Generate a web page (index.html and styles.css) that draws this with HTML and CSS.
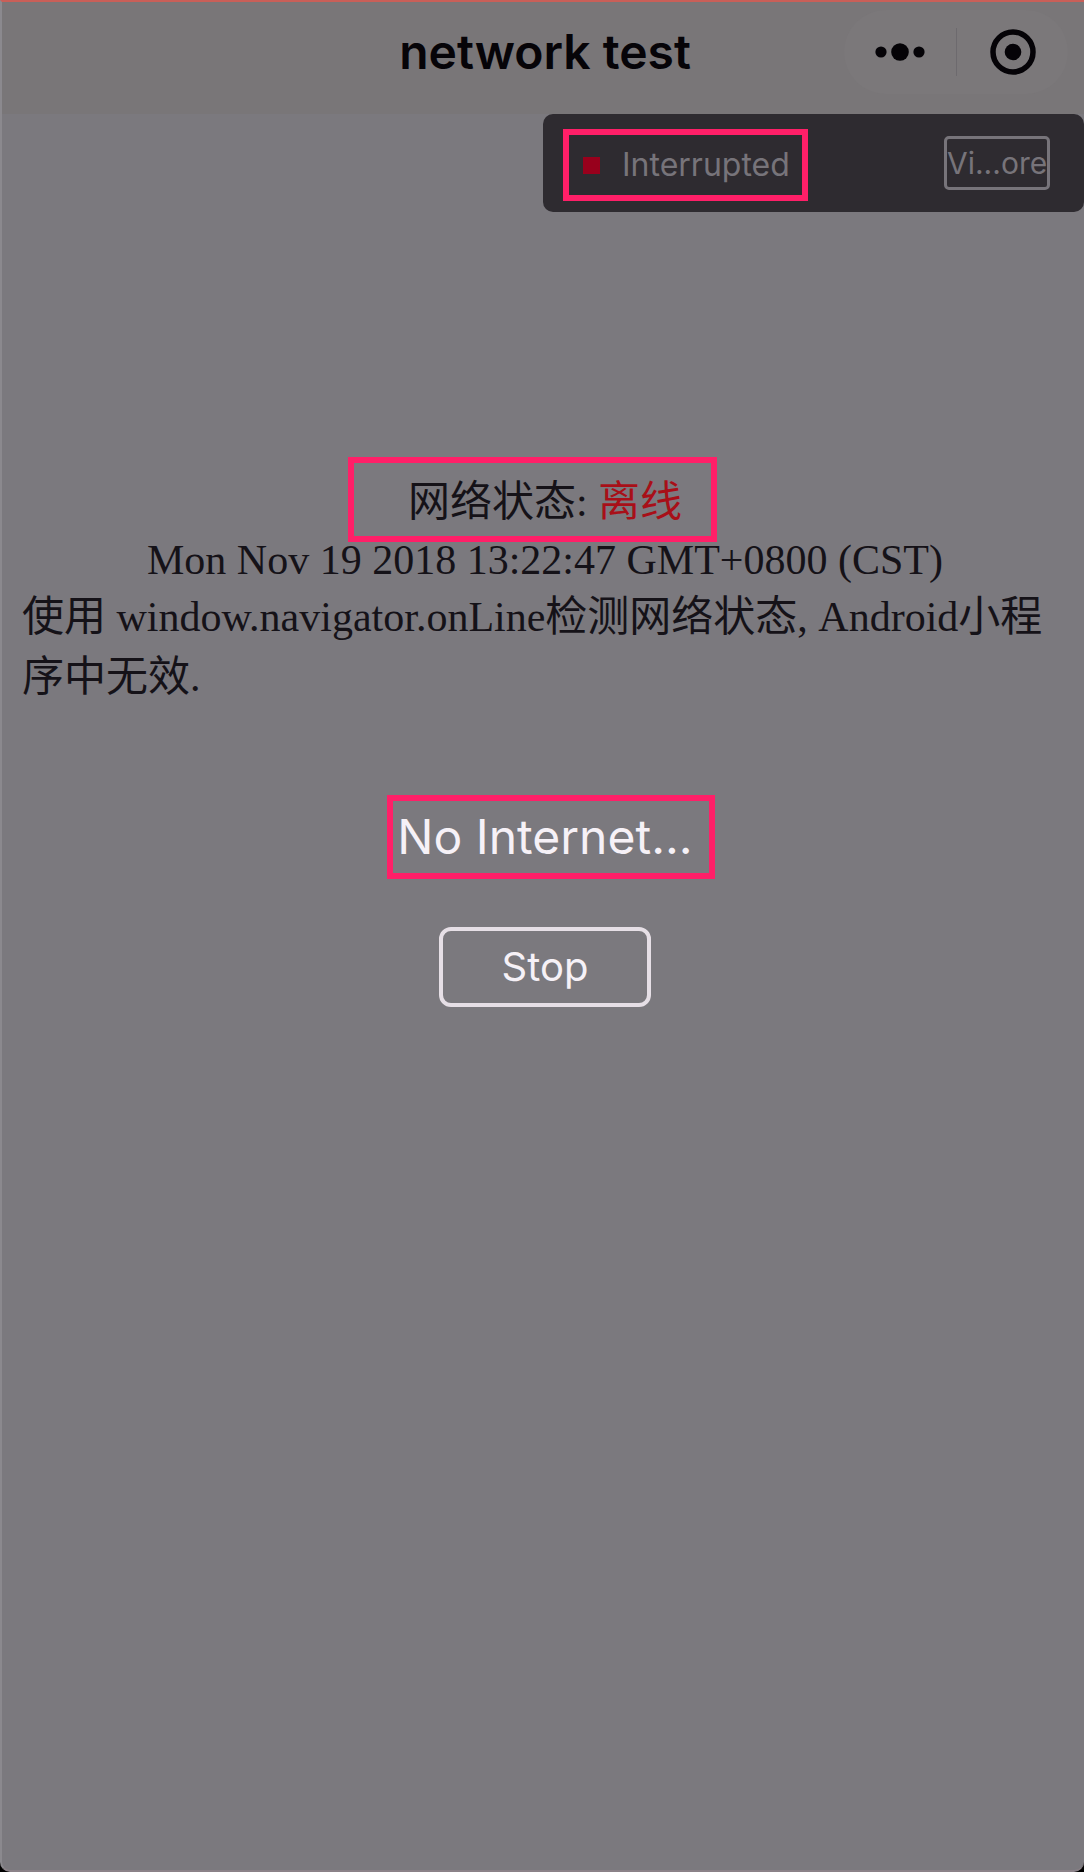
FILE: index.html
```
<!DOCTYPE html>
<html lang="zh-CN">
<head>
<meta charset="utf-8">
<meta name="viewport" content="width=device-width, initial-scale=1">
<title>network test</title>
<link rel="stylesheet" href="styles.css">
</head>
<body>
<div class="screen">
  <header class="navbar">
    <h1 class="title">network test</h1>
    <div class="capsule">
      <button class="capsule-button" type="button" aria-label="More">
        <svg width="52" height="48" viewBox="0 0 52 48" aria-hidden="true"><circle cx="7" cy="24" r="5.6"/><circle cx="26" cy="24" r="8.8"/><circle cx="45" cy="24" r="5.6"/></svg>
      </button>
      <button class="capsule-button" type="button" aria-label="Close">
        <svg width="48" height="48" viewBox="0 0 48 48" aria-hidden="true"><circle cx="24" cy="24" r="20" fill="none" stroke="#050307" stroke-width="5.5"/><circle cx="24" cy="24" r="8.3"/></svg>
      </button>
    </div>
  </header>
  <aside class="toast">
    <div class="mark mark-toast"><span class="dot"></span><span>Interrupted</span></div>
    <button class="view-more" type="button">Vi...ore</button>
  </aside>
  <main class="content">
    <p class="status"><span class="mark mark-status">网络状态: <span class="offline">离线</span></span></p>
    <p class="date">Mon Nov 19 2018 13:22:47 GMT+0800 (CST)</p>
    <p class="note">使用 window.navigator.onLine检测网络状态, Android小程序中无效.</p>
    <section class="prompt">
      <p class="prompt-text mark mark-prompt">No Internet...</p>
      <button class="stop" type="button">Stop</button>
    </section>
  </main>
</div>
</body>
</html>
```
FILE: styles.css
```
* { box-sizing: border-box; }
html { background: #000; }
body { margin: 0; font-family: Inter, "Liberation Sans", sans-serif; }
p, h1 { margin: 0; }
button { padding: 0; background: none; color: inherit; font: inherit; }

.screen {
  min-height: 100vh;
  display: flex;
  flex-direction: column;
  background: #7b797e;
  border-top: 2px solid #c95f58;
  border-left: 2px solid #8b898e;
  border-bottom: 2px solid #8b8288;
  border-radius: 0 0 10px 10px;
  overflow: hidden;
}

.navbar {
  height: 112px;
  padding: 7px 16px 20px 20px;
  display: grid;
  grid-template-columns: 1fr auto 1fr;
  align-items: center;
  background: #797678;
}
.title { grid-column: 2; font-size: 48px; line-height: 56px; font-weight: 600; color: #060408; }
.capsule {
  justify-self: end;
  width: 224px;
  height: 84px;
  display: grid;
  grid-template-columns: 1fr 1fr;
  align-items: center;
  border-radius: 42px;
  background: #7b787a;
  fill: #050307;
}
.capsule-button { height: 48px; border: 0; display: flex; align-items: center; justify-content: center; }
.capsule-button + .capsule-button { border-left: 1px solid #6d6a6e; }

.toast {
  align-self: flex-end;
  width: 50%;
  height: 98px;
  padding: 0 34px 0 40px;
  display: flex;
  align-items: center;
  justify-content: space-between;
  border-radius: 10px;
  background: #2e2b30;
  color: #77747a;
  font-size: 32px;
  line-height: 40px;
}
.dot { width: 17px; height: 17px; background: #98001c; }
.view-more {
  width: 106px;
  height: 54px;
  border: 3px solid #77747a;
  border-radius: 5px;
  font-size: 30px;
  white-space: nowrap;
}

/* Pink call-out frames laid over the content */
.mark { position: relative; }
.mark::after { content: ""; position: absolute; border: 6px solid #ff1f68; pointer-events: none; }
.mark-toast { display: flex; align-items: center; gap: 22px; padding-top: 4px; }
.mark-toast::after { inset: -12px -18px -16px -20px; }
.mark-status { display: inline-block; }
.mark-status::after { inset: -14px -35px -9px -60px; }
.mark-prompt::after { inset: -10px -22px -10px -10px; }

.content {
  padding: 259px 16px 40px 20px;
  font-family: "Liberation Serif", "Noto Sans CJK SC", serif;
  font-size: 42px;
  line-height: 60px;
  color: #151218;
}
.status, .date { text-align: center; }
.status { line-height: 62px; }
.date { line-height: 54px; }
.offline { color: #a80f18; }

.prompt {
  margin-top: 98px;
  display: flex;
  flex-direction: column;
  align-items: center;
  gap: 58px;
  font-family: Inter, "Liberation Sans", sans-serif;
  color: #f6f1f7;
}
.prompt-text { font-size: 48px; line-height: 64px; }
.stop {
  width: 212px;
  height: 80px;
  border: 4px solid #e6dfe6;
  border-radius: 12px;
  font-size: 40px;
  line-height: 48px;
}
```
